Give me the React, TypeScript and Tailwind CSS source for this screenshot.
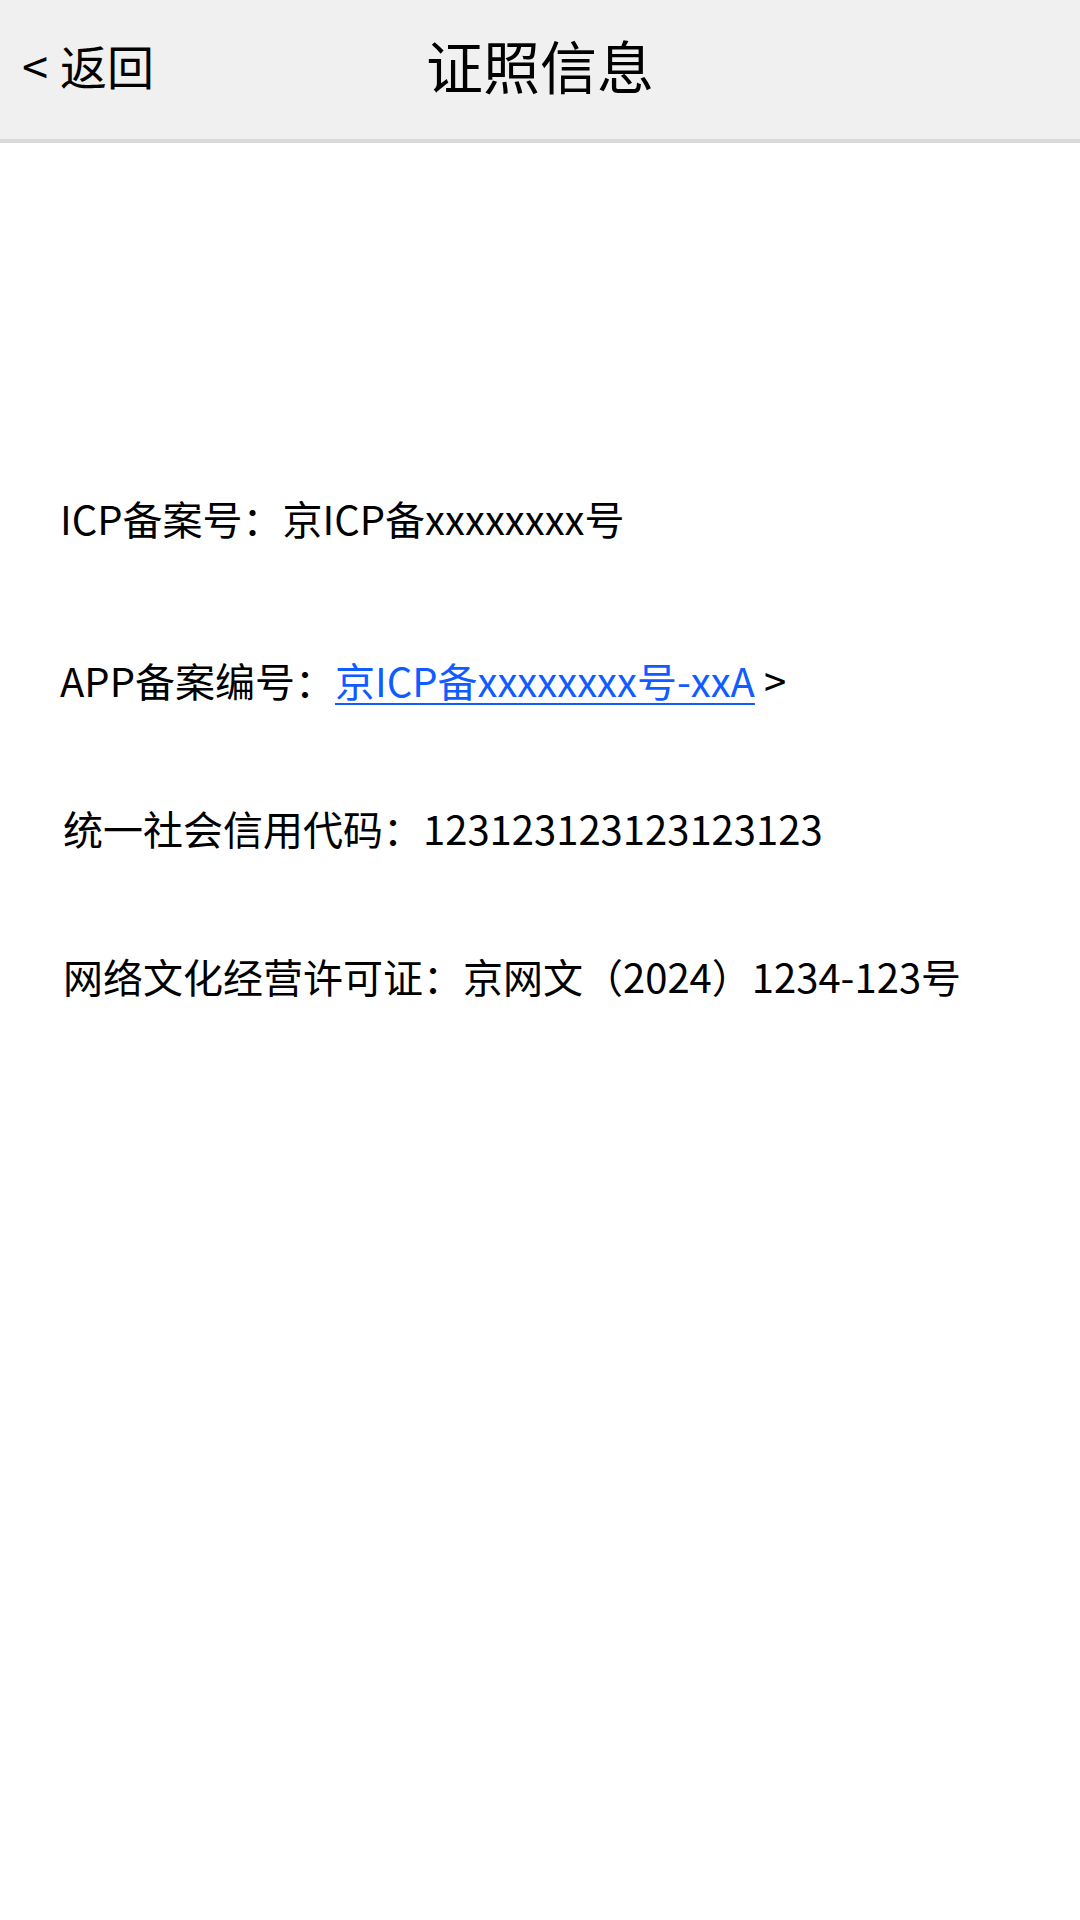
import React from 'react';

const rows: { label: string; value: string; link?: boolean; indent?: boolean }[] = [
  { label: 'ICP备案号：', value: '京ICP备xxxxxxxx号' },
  { label: 'APP备案编号：', value: '京ICP备xxxxxxxx号-xxA', link: true },
  { label: '统一社会信用代码：', value: '123123123123123123', indent: true },
  { label: '网络文化经营许可证：', value: '京网文（2024）1234-123号', indent: true },
];

export default function App() {
  return (
    <div
      className="w-[1080px] min-h-[1920px] bg-white text-black"
      style={{ fontFamily: '"Noto Sans CJK SC", "Noto Sans", sans-serif' }}
    >
      {/* Header */}
      <div className="relative flex items-center h-[143px] pb-[10px] bg-[#f0f0f0] border-b-4 border-[#d9d9d9]">
        <div className="pl-[22px] text-[47px] leading-none flex items-center gap-[12px]">
          <span>&lt;</span>
          <span>返回</span>
        </div>
        <div className="absolute left-0 right-0 text-center text-[57px] leading-none pointer-events-none">
          证照信息
        </div>
      </div>

      {/* Content */}
      <div className="pt-[355px] pl-[60px] flex flex-col text-[40px] leading-none">
        {rows.map((row, i) => (
          <div
            key={row.label}
            className={(i === 0 ? 'h-[162px]' : 'h-[148px]') + (row.indent ? ' pl-[3px]' : '')}
          >
            <span>{row.label}</span>
            {row.link ? (
              <>
                <span className="text-[#105cff] underline underline-offset-[6px] decoration-2">{row.value}</span>
                <span> &gt;</span>
              </>
            ) : (
              <span>{row.value}</span>
            )}
          </div>
        ))}
      </div>
    </div>
  );
}
